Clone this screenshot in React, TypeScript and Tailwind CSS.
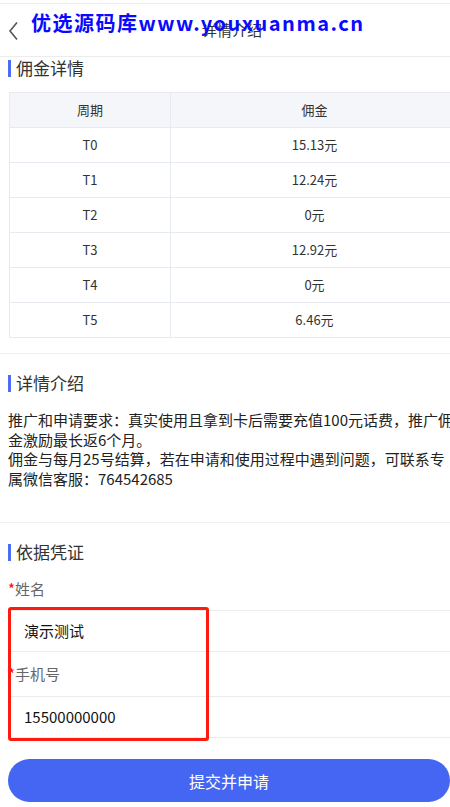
const rows = [
  { period: 'T0', amount: '15.13元' },
  { period: 'T1', amount: '12.24元' },
  { period: 'T2', amount: '0元' },
  { period: 'T3', amount: '12.92元' },
  { period: 'T4', amount: '0元' },
  { period: 'T5', amount: '6.46元' },
];

const SectionTitle = ({ title }: { title: string }) => (
  <div className="flex items-center h-[22px] px-2">
    <div className="w-[3px] h-[17px] bg-[#4a6cf7]"></div>
    <span className="ml-[5px] text-[17px] leading-[22px] text-[#333]">{title}</span>
  </div>
);

export default function App() {
  return (
    <div className="relative w-[450px] h-[807px] overflow-hidden bg-white font-['Noto_Sans_CJK_SC','Noto_Sans',sans-serif]">
      <div className="w-[464px] pt-[3px]">
        {/* Header */}
        <div className="relative h-[54px] border-y border-[#ececec] flex items-center justify-center">
          <svg className="absolute left-[8px] top-[17px]" width="11" height="20" viewBox="0 0 11 20">
            <polyline points="9,1.5 2,10 9,18.5" fill="none" stroke="#555" strokeWidth="1.6" />
          </svg>
          <span className="text-[15px] text-[#333]">详情介绍</span>
        </div>

        {/* 佣金详情 */}
        <div className="pb-[15px] border-b border-[#f0f0f0]">
          <SectionTitle title="佣金详情" />
          <table className="mt-[13px] ml-[9px] w-[450px] border-collapse text-[13px] text-[#333]">
            <thead>
              <tr className="h-[35px] bg-[#f5f6fa]">
                <th className="w-[161px] border border-[#e8eaf2] font-normal">周期</th>
                <th className="border border-[#e8eaf2] font-normal">佣金</th>
              </tr>
            </thead>
            <tbody>
              {rows.map((r) => (
                <tr key={r.period} className="h-[35px]">
                  <td className="border border-[#e8eaf2] text-center">{r.period}</td>
                  <td className="border border-[#e8eaf2] text-center">{r.amount}</td>
                </tr>
              ))}
            </tbody>
          </table>
        </div>

        {/* 详情介绍 */}
        <div className="pt-[18px] pb-[34px] border-b border-[#f0f0f0]">
          <SectionTitle title="详情介绍" />
          <p className="mt-[16px] px-2 text-[15px] leading-[19.5px] text-[#222]">
            推广和申请要求：真实使用且拿到卡后需要充值100元话费，推广佣金激励最长返6个月。
            <br />
            佣金与每月25号结算，若在申请和使用过程中遇到问题，可联系专属微信客服：764542685
          </p>
        </div>

        {/* 依据凭证 */}
        <div className="pt-[18px]">
          <SectionTitle title="依据凭证" />
          <div className="px-2">
            <div className="h-[47px] pt-[16px] text-[15px] leading-[20px] text-[#666]">
              <span className="text-[#f00]">*</span>姓名
            </div>
            <div className="h-[42px] border-y border-[#ececec] flex items-center pl-4 text-[15px] text-[#111]">
              演示测试
            </div>
            <div className="h-[44px] flex items-center text-[15px] text-[#666]">
              <span className="text-[#f00]">*</span>手机号
            </div>
            <div className="h-[42px] border-y border-[#ececec] flex items-center pl-4 text-[15px] text-[#111]">
              15500000000
            </div>
            <button className="mt-[21px] w-[442px] h-[43px] rounded-full bg-[#4466f2] text-white text-[16px]">
              提交并申请
            </button>
          </div>
        </div>
      </div>

      {/* annotation box */}
      <div className="absolute left-[8px] top-[607px] w-[201px] h-[134px] border-[3px] border-[#ff1a10] rounded-[3px]"></div>

      {/* watermark */}
      <div className="absolute left-[31px] top-[9px] text-[20px] font-bold tracking-[1.5px] text-[#0a0aff] leading-[28px]">
        优选源码库www.youxuanma.cn
      </div>
    </div>
  );
}
